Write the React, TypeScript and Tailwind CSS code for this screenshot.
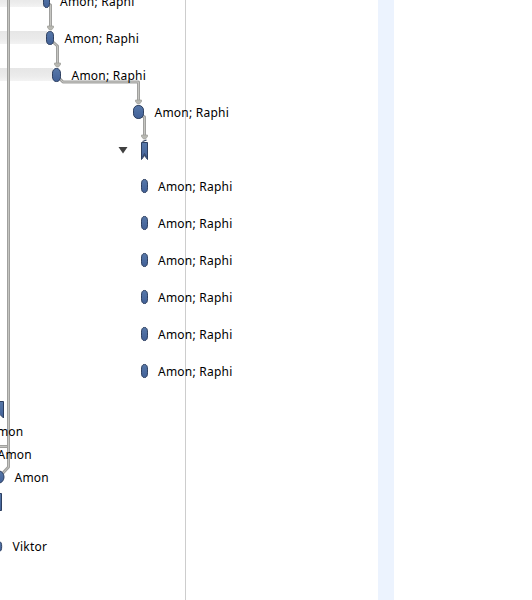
type Label = { text: string; x: number; y: number };

const labels: Label[] = [
  { text: "Amon; Raphi", x: 60, y: 2 },
  { text: "Amon; Raphi", x: 64.5, y: 39 },
  { text: "Amon; Raphi", x: 71.5, y: 76 },
  { text: "Amon; Raphi", x: 154.5, y: 113 },
  ...[187, 224, 261, 298, 335, 372].map((y) => ({ text: "Amon; Raphi", x: 158, y })),
  { text: "Amon", x: -11, y: 432 },
  { text: "Amon", x: -2.5, y: 455 },
  { text: "Amon", x: 14.5, y: 478 },
  { text: "Viktor", x: 12.5, y: 547 },
];

function Task({ x, y, w, h = 13 }: { x: number; y: number; w: number; h?: number }) {
  return (
    <rect x={x - w / 2} y={y - h / 2} width={w} height={h} rx={w * 0.46} ry={h * 0.36} fill="url(#task)" stroke="#2d3f60" />
  );
}

function Link({ d }: { d: string }) {
  return (
    <g fill="none" strokeLinejoin="round">
      <path d={d} stroke="#a0a09e" strokeWidth="3" />
      <path d={d} stroke="#c6c6c2" strokeWidth="1" />
    </g>
  );
}

function Arrow({ x, y }: { x: number; y: number }) {
  return <path d={`M${x - 3} ${y - 4}h6v1.5l-2 2.5h-2l-2-2.5z`} fill="#b8b8b2" stroke="#9c9c97" strokeWidth="0.7" />;
}

export default function App() {
  return (
    <main className="relative h-[600px] w-[532px] overflow-hidden bg-white">
      <svg className="block" width="532" height="600" viewBox="0 0 532 600">
        <defs>
          <linearGradient id="task" x1="0" y1="0" x2="0" y2="1">
            <stop offset="0" stopColor="#5778a9" />
            <stop offset="1" stopColor="#426198" />
          </linearGradient>
          <linearGradient id="slack" x1="0" y1="0" x2="0" y2="1">
            <stop offset="0" stopColor="#e6e6e6" />
            <stop offset="0.6" stopColor="#ebebeb" />
            <stop offset="1" stopColor="#f3f3f3" />
          </linearGradient>
        </defs>
        <rect x="378" width="16" height="600" fill="#ecf3fe" />
        <path d="M185.5 0V600" stroke="#cdcdcd" />
        <rect y="-6" width="44" height="13" fill="url(#slack)" />
        <rect y="31" width="47" height="13" fill="url(#slack)" />
        <rect y="68" width="53" height="13" fill="url(#slack)" />

        <Link d="M0 446.5H8.5" />
        <Link d="M8.5 0V467L2 474" />
        <Link d="M47 3L50.5 5V27" />
        <Link d="M53 42L57.5 46V63" />
        <Link d="M59 78L63 82H138.5V100" />
        <Link d="M142 116L144.5 117V136" />
        <Arrow x={50.5} y={30} />
        <Arrow x={57.5} y={67} />
        <Arrow x={138.5} y={104} />
        <Arrow x={144.5} y={139} />

        <Task x={46.5} y={1} w={6} />
        <Task x={50} y={38} w={7} />
        <Task x={56.5} y={75} w={8} />
        <Task x={138.5} y={112} w={10} />
        {[186, 223, 260, 297, 334, 371].map((y) => (
          <Task key={y} x={144.5} y={y} w={6} />
        ))}
        <ellipse cx="-1" cy="477" rx="5" ry="6" fill="url(#task)" stroke="#2d3f60" />
        <ellipse cx="-1" cy="546.5" rx="2.7" ry="5" fill="url(#task)" stroke="#2d3f60" />

        <path d="M141.5 142.5H147.5V159.5L144.5 155.5L141.5 159.5Z" fill="url(#task)" stroke="#2d3f60" />
        <path d="M142.5 157L144.5 153.5L146.5 157" fill="none" stroke="#2d3f60" strokeWidth="0.8" />
        <path d="M142.5 141.5L146.5 140" stroke="#2d3f60" strokeWidth="1.3" />
        <path d="M-4 401.5H3.5V418L0 414.5H-4Z" fill="url(#task)" stroke="#2d3f60" />
        <path d="M-4 493.5H1.5V510.5H-4Z" fill="url(#task)" stroke="#2d3f60" />
        <path d="M118.5 147H127.5L123 153.5Z" fill="#404040" />
      </svg>
      {labels.map((label) => (
        <span
          key={`${label.x}-${label.y}`}
          className="absolute -translate-y-1/2 whitespace-nowrap font-['Noto_Sans',sans-serif] text-[12px] leading-4 tracking-[0.23px] text-black"
          style={{ left: label.x, top: label.y }}
        >
          {label.text}
        </span>
      ))}
    </main>
  );
}
